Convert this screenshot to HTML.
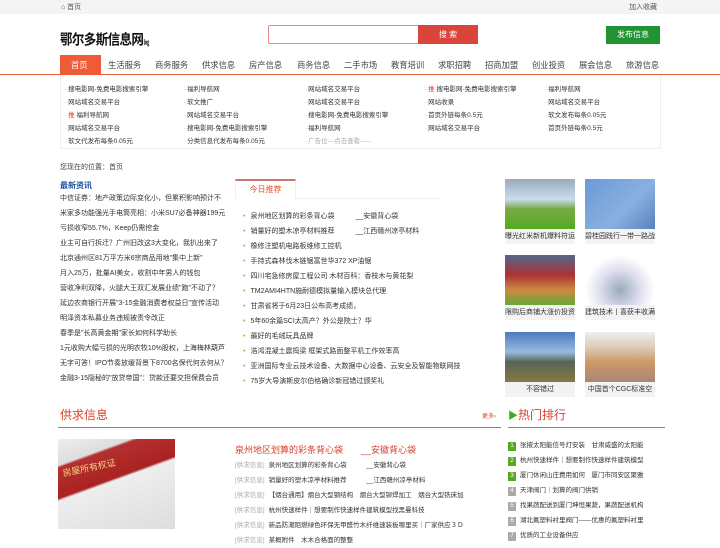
<!DOCTYPE html>
<html><head><meta charset="utf-8"><style>
*{margin:0;padding:0;box-sizing:border-box}
body{width:720px;height:540px;overflow:hidden;background:#fff;font-family:"Liberation Sans","Noto Sans CJK SC",sans-serif;font-size:7px;color:#333;position:relative}
.a{position:absolute;white-space:nowrap}
.top{position:absolute;left:0;top:0;width:720px;height:14px;background:#f4f4f4}
.nav span{position:absolute;top:59px;font-size:8.3px;color:#444}
.lk span{position:absolute;font-size:6.5px;color:#333}
.lk span:before{content:"·";color:#999;margin-right:1px}
.ll div{height:15px;line-height:15px;font-size:7px}
.rl div{height:15px;line-height:15px;font-size:7px}
.rl div:before{content:"•";color:#9b3;margin-right:5px}
.img{position:absolute;width:70px;height:50px}
.cap{position:absolute;width:70px;height:15px;background:#f3f3f3;font-size:7px;line-height:15px;text-align:center;overflow:hidden;white-space:nowrap}
.gq div{height:15px;line-height:15px;font-size:6.5px}
.gq i{font-style:normal;color:#aaa;margin-right:4px}
.hot div{height:15px;line-height:15px;font-size:6.5px;white-space:nowrap;overflow:hidden}
.hot b{display:inline-block;width:8px;height:9px;line-height:9px;text-align:center;color:#fff;background:#aaa;font-weight:normal;font-size:6px;margin-right:4px}
.hot b.g{background:#5a2}
</style></head><body>
<div class="top"></div>
<div class="a" style="left:61px;top:2px;font-size:7px;color:#555">⌂ 首页</div>
<div class="a" style="left:629px;top:2px;font-size:7px;color:#555">加入收藏</div>
<div class="a" style="left:60px;top:27px;font-size:12.5px;font-weight:bold;color:#111;letter-spacing:-0.6px;transform:scaleY(1.15);transform-origin:left top">鄂尔多斯信息网<span style="font-size:6px">㏒</span></div>
<div class="a" style="left:268px;top:25px;width:210px;height:19px;border:1px solid #e88;border-radius:2px"></div>
<div class="a" style="left:418px;top:25px;width:60px;height:19px;background:#d9453a;color:#fff;font-size:8px;text-align:center;line-height:19px">搜 索</div>
<div class="a" style="left:606px;top:26px;width:54px;height:18px;background:#229333;color:#fff;font-size:8px;text-align:center;line-height:18px">发布信息</div>
<div class="a" style="left:0;top:74px;width:720px;height:1px;background:#e8603c"></div>
<div class="a" style="left:60px;top:55px;width:41px;height:20px;background:#ee5b36"></div>
<div class="nav">
<span style="left:71px;color:#fff">首页</span><span style="left:108px">生活服务</span><span style="left:155px">商务服务</span><span style="left:202px">供求信息</span><span style="left:249px">房产信息</span><span style="left:297px">商务信息</span><span style="left:344px">二手市场</span><span style="left:391px">教育培训</span><span style="left:438px">求职招聘</span><span style="left:485px">招商加盟</span><span style="left:532px">创业投资</span><span style="left:579px">展会信息</span><span style="left:626px">旅游信息</span>
</div>
<div class="a" style="left:60px;top:75px;width:601px;height:74px;border:1px solid #eee;border-top:none"></div>
<div class="lk">
<span style="left:65px;top:83px">搜电影网-免费电影搜索引擎</span><span style="left:184px;top:83px">福利导航网</span><span style="left:305px;top:83px">网站域名交易平台</span><span style="left:425px;top:83px"><b style="color:#e33;font-weight:normal">推</b> 搜电影网-免费电影搜索引擎</span><span style="left:545px;top:83px">福利导航网</span>
<span style="left:65px;top:96px">网站域名交易平台</span><span style="left:184px;top:96px">软文推广</span><span style="left:305px;top:96px">网站域名交易平台</span><span style="left:425px;top:96px">网站收录</span><span style="left:545px;top:96px">网站域名交易平台</span>
<span style="left:65px;top:109px"><b style="color:#e33;font-weight:normal">推</b> 福利导航网</span><span style="left:184px;top:109px">网站域名交易平台</span><span style="left:305px;top:109px">搜电影网-免费电影搜索引擎</span><span style="left:425px;top:109px">首页外链每条0.5元</span><span style="left:545px;top:109px">软文发布每条0.05元</span>
<span style="left:65px;top:122px">网站域名交易平台</span><span style="left:184px;top:122px">搜电影网-免费电影搜索引擎</span><span style="left:305px;top:122px">福利导航网</span><span style="left:425px;top:122px">网站域名交易平台</span><span style="left:545px;top:122px">首页外链每条0.5元</span>
<span style="left:65px;top:135px">软文代发布每条0.05元</span><span style="left:184px;top:135px">分类信息代发布每条0.05元</span><span style="left:305px;top:135px;color:#aaa">广告位---点击查看-----</span>
</div>
<div class="a" style="left:60px;top:162px;font-size:7px;color:#444">您现在的位置：首页</div>
<div class="a" style="left:60px;top:180px;font-size:8px;font-weight:bold;color:#1a4fa0">最新资讯</div>
<div class="a ll" style="left:60px;top:191px;width:175px;overflow:hidden">
<div>中信证券：地产政策边际变化小，但累积影响预计不</div><div>米家多功能强光手电筒亮相：小米SU7必备神器199元</div><div>亏损收窄55.7%，Keep仍需挖金</div><div>业主可自行拆迁？广州旧改这3大变化，我扒出来了</div><div>北京通州区81万平方米6宗商品用地"集中上新"</div><div>月入25万，批量AI美女，收割中年男人的钱包</div><div>营收净利双降，火腿大王双汇发展业绩"跑"不动了？</div><div>延边农商银行开展"3-15金融消费者权益日"宣传活动</div><div>明泽资本私募业务违规被责令改正</div><div>春季是"长高黄金期"家长如何科学助长</div><div>1元收购大幅亏损的光明农牧10%股权，上海梅林葫芦</div><div>无字可答！IPO节奏放缓背景下8700名保代何去何从？</div><div>金融3-15隐秘的"放贷帝国"：贷款还要交担保费会员</div>
</div>
<div class="a" style="left:235px;top:198px;width:206px;height:1px;background:#eee"></div>
<div class="a" style="left:235px;top:179px;width:61px;height:20px;border-top:2px solid #c9776a;background:#fff;border-left:1px solid #eee;border-right:1px solid #eee;color:#e0502a;font-size:8px;text-align:center;line-height:18px">今日推荐</div>
<div class="a rl" style="left:243px;top:209px">
<div>泉州地区划算的彩条背心袋　　　__安徽背心袋</div><div>销量好的塑木凉亭材料推荐　　　__江西赣州凉亭材料</div><div>橡修注塑机电路板维修工控机</div><div>手持式森林伐木链锯富世华372 XP油锯</div><div>四川宅急修房屋工程公司 木材百科：香枝木与黄花梨</div><div>TM2AMI4HTN施耐德模拟量输入模块总代理</div><div>甘肃省将于6月23日公布高考成绩，</div><div>5年60余篇SCI太高产？外公是院士？华</div><div>最好的毛绒玩具品牌</div><div>浩鸿混凝土震捣梁 框架式路面整平机工作效率高</div><div>亚洲国际专业云技术设备、大数据中心设备、云安全及智能物联网技</div><div>75岁大导演斯皮尔伯格确诊新冠错过颁奖礼</div>
</div>
<div class="img" style="left:505px;top:179px;background:linear-gradient(#9ab 0,#cde 40%,#7a4 60%,#5a2 100%)"></div>
<div class="cap" style="left:505px;top:229px">曝光红米新机爆料符运</div>
<div class="img" style="left:585px;top:179px;background:linear-gradient(135deg,#6a9ad8,#8ab0e0 60%,#5a80c0)"></div>
<div class="cap" style="left:585px;top:229px">碧桂园践行一带一路战</div>
<div class="img" style="left:505px;top:255px;background:linear-gradient(#568 0,#a33 40%,#c84 70%,#6a3 100%)"></div>
<div class="cap" style="left:505px;top:305px">限购后商铺大涨价投资</div>
<div class="img" style="left:585px;top:255px;background:radial-gradient(circle at 50% 70%,#9ab 0,#dde 40%,#fff 70%)"></div>
<div class="cap" style="left:585px;top:305px">建筑技术丨喜获丰收满</div>
<div class="img" style="left:505px;top:332px;background:linear-gradient(#4a7ac0 0,#9bd 40%,#565 60%,#874 100%)"></div>
<div class="cap" style="left:505px;top:382px">不容错过</div>
<div class="img" style="left:585px;top:332px;background:linear-gradient(#eee 0,#dcb 30%,#c96 60%,#a87 100%)"></div>
<div class="cap" style="left:585px;top:382px">中国首个CGC标准空</div>
<div class="a" style="left:60px;top:406px;font-size:12px;color:#d9412a">供求信息</div>
<div class="a" style="left:482px;top:411px;font-size:6px;color:#d9412a">更多›</div>
<div class="a" style="left:58px;top:427px;width:443px;height:1px;background:#e0604a"></div>
<div class="a" style="left:508px;top:406px;font-size:12px;color:#d9412a"><span style="color:#4a2;font-size:10px">▶</span>热门排行</div>
<div class="a" style="left:508px;top:427px;width:157px;height:1px;background:#e0604a"></div>
<div class="a" style="left:58px;top:439px;width:117px;height:90px;background:linear-gradient(160deg,#eee 0,#ddd 20%,#b43030 22%,#a22 45%,#eee 47%,#ddd 100%)"><span style="position:absolute;left:4px;top:22px;color:#f4d080;font-size:9px;transform:rotate(-12deg)">房屋所有权证</span></div>
<div class="a" style="left:235px;top:443px;font-size:9px;color:#d9412a">泉州地区划算的彩条背心袋　　__安徽背心袋</div>
<div class="a gq" style="left:235px;top:458px">
<div><i>[供求信息]</i>泉州地区划算的彩条背心袋　　　__安徽背心袋</div><div><i>[供求信息]</i>销量好的塑木凉亭材料推荐　　　__江西赣州凉亭材料</div><div><i>[供求信息]</i>【烟台通用】烟台大型钢结构　烟台大型铆焊加工　烟台大型铣床加</div><div><i>[供求信息]</i>杭州快速样件｜想要制作快速样件建筑模型找黑曼科技</div><div><i>[供求信息]</i>新品防潮阻燃绿色环保无甲醛竹木纤维速装板哪里买｜厂家供应３Ｄ</div><div><i>[供求信息]</i>某概附件　木木合格面的整整</div>
</div>
<div class="a hot" style="left:508px;top:438px;width:150px">
<div><b class="g">1</b>张掖太阳能信号灯安装　甘肃威盛的太阳能</div><div><b class="g">2</b>杭州快速样件｜想要制作快速样件建筑模型</div><div><b class="g">3</b>厦门休闲山庄费用如何　厦门市同安区聚雅</div><div><b>4</b>天津阀门｜划算的阀门供销</div><div><b>5</b>找果蔬配送到厦门坤恒果蔬，果蔬配送机构</div><div><b>6</b>湖北氟塑料衬里阀门——优惠的氟塑料衬里</div><div><b>7</b>优质的工业设备供应</div>
</div>
</body></html>
